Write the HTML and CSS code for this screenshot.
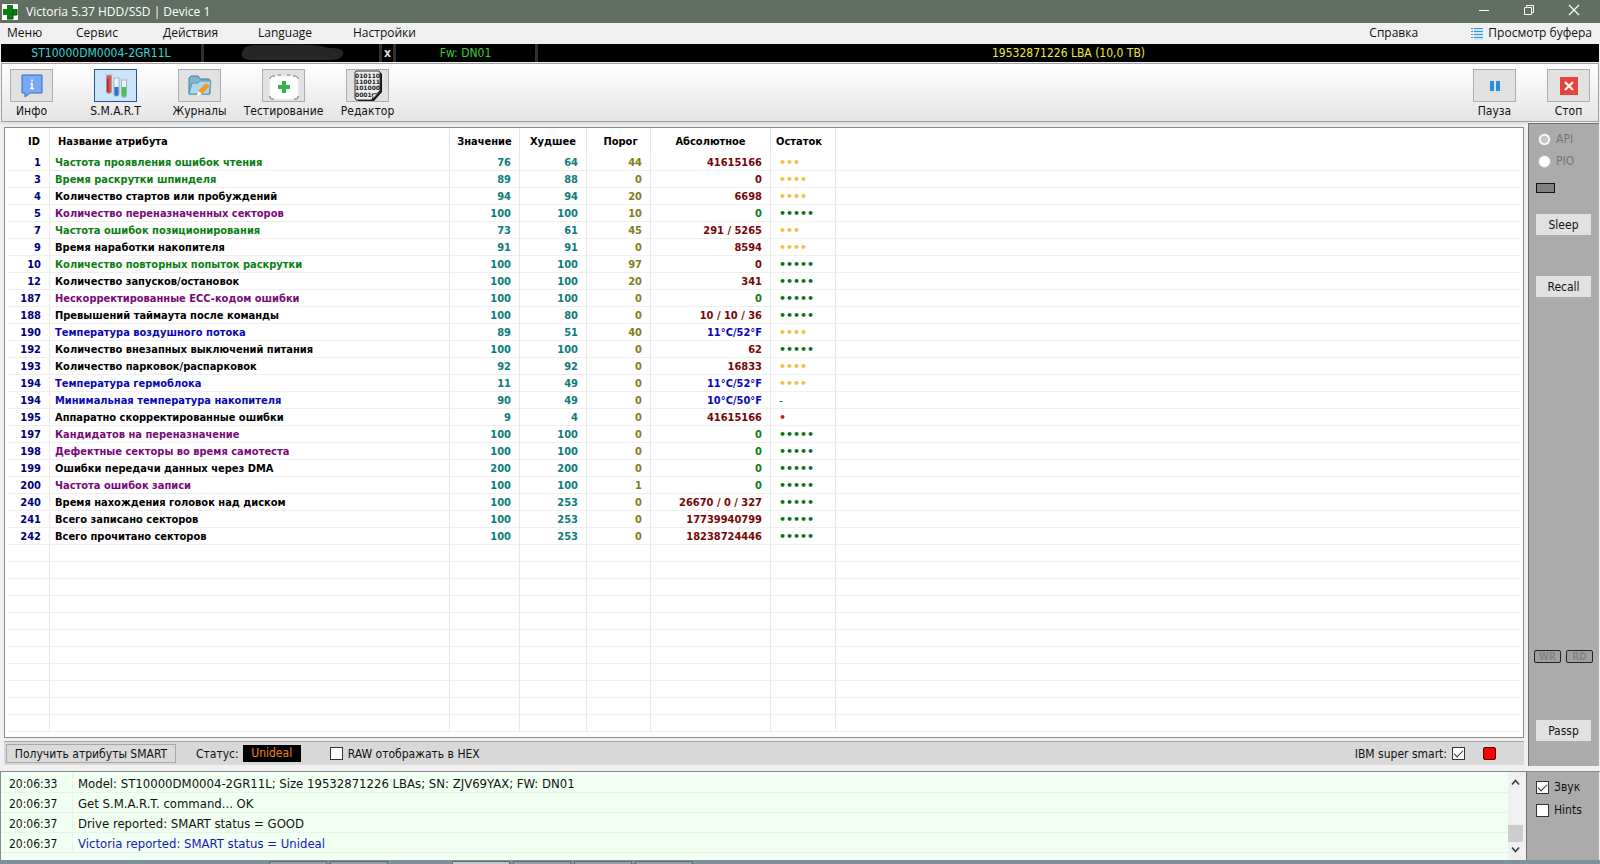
FILE: index.html
```html
<!DOCTYPE html>
<html lang="ru">
<head>
<meta charset="utf-8">
<title>Victoria 5.37 HDD/SSD | Device 1</title>
<link rel="stylesheet" href="styles.css">
</head>
<body>
<header class="titlebar">
  <svg class="app-icon" width="16" height="16" viewBox="0 0 16 16"><rect width="16" height="16" fill="#fff"/><path d="M5 1h6v4h4v6h-4v4H5v-4H1V5h4z" fill="#0a800f"/><path d="M11 5v6M5 15h6v-4h4V5" fill="none" stroke="#064f0a"/></svg>
  <h1 class="title">Victoria 5.37 HDD/SSD | Device 1</h1>
  <div class="window-controls">
    <button aria-label="Свернуть"><svg width="12" height="12" viewBox="0 0 12 12"><path d="M1 6.500h10" stroke="#fff"/></svg></button>
    <button aria-label="Восстановить"><svg width="12" height="12" viewBox="0 0 12 12" fill="none" stroke="#fff"><path d="M1.500 3.500h7v7h-7zM3.500 3.500v-2h7v7h-2"/></svg></button>
    <button aria-label="Закрыть"><svg width="12" height="12" viewBox="0 0 12 12"><path d="M1 1l10 10M11 1L1 11" stroke="#fff" stroke-width="1.200"/></svg></button>
  </div>
</header>

<nav class="menu">
  <button class="m1">Меню</button><button class="m2">Сервис</button><button class="m3">Действия</button><button class="m3">Language</button><button>Настройки</button>
  <button class="help">Справка</button>
  <button class="buffer"><svg width="12" height="13" viewBox="0 0 12 13"><path d="M0 1.500h2M0 4.500h2M0 7.500h2M0 10.500h2M3 1.500h9M3 4.500h9M3 7.500h9M3 10.500h9" stroke="#2f9be0"/><path d="M3 3h9M3 6h9M3 9h9M3 12h9" stroke="#a9dcf7"/></svg>Просмотр буфера</button>
</nav>

<section class="drive">
  <span class="model">ST10000DM0004-2GR11L</span>
  <span class="serial"><svg width="103" height="17" viewBox="0 0 103 17"><path d="M1 9C2 3 7 1 15 1h22c17-1 42-1 50 3 11 0 16 1 15 6-2 7-12 6-23 6H12C4 16 0 14 1 9z" fill="#262626"/></svg></span>
  <button class="clear">x</button>
  <span class="fw">Fw: DN01</span>
  <span class="lba">19532871226 LBA (10,0 TB)</span>
</section>

<section class="toolbar">
  <button class="tool"><span class="tile"><svg width="22" height="24" viewBox="0 0 22 24"><path d="M1 1h20v18H9l-5 4v-4H1z" fill="#77a9f4" stroke="#3d6db5"/><path d="M11 5.500v2M9.500 9.500H11v5M9 14.500h4" fill="none" stroke="#fff" stroke-width="1.600"/></svg></span>Инфо</button>
  <button class="tool active"><span class="tile"><svg width="24" height="26" viewBox="0 0 24 26"><g stroke="#8fa3b5" stroke-width=".8"><path d="M2.500 2h5v16a2.500 2.500 0 0 1-5 0z" fill="#e55246"/><path d="M10 5h5v16a2.500 2.500 0 0 1-5 0z" fill="#eef7ff"/><path d="M17.500 7h5v15a2.500 2.500 0 0 1-5 0z" fill="#eef7ff"/></g><path d="M2.900 6h1.800v13h-1.800z" fill="#b82a2a"/><path d="M10.400 14h4.200v7a2 2 0 0 1-4.200 0z" fill="#346fd0"/><path d="M17.900 14h4.200v8a2 2 0 0 1-4.200 0z" fill="#4cc04c"/><path d="M1.500 1.500h7M9 4.500h7M16.500 6.500h7" stroke="#b9cedf" stroke-width="1.500"/></svg></span>S.M.A.R.T</button>
  <button class="tool"><span class="tile"><svg width="26" height="24" viewBox="0 0 26 24"><path d="M2 20V4l2-2h7l2 3h9l1 2v13z" fill="#7fb4d2" stroke="#467f9f"/><path d="M2 20L5 9h6l2-2h11l-2 13z" fill="#aed7ec" stroke="#5b94b4"/><path d="M10 22l1-5 8-8 4 3-8 8z" fill="#f39b25"/><path d="M10 22l1-5 4 3z" fill="#fff"/></svg></span>Журналы</button>
  <button class="tool"><span class="tile"><svg width="32" height="28" viewBox="0 0 32 28"><path d="M4 4h24l2 3v19l-2 1H4l-2-1V7z" fill="#fff" stroke="#eee"/><path d="M2 7V6l2-2h3M25 4h3l2 2v1M10 3h3M19 3h3M2 24v2l2 1h2M26 27h2l2-1v-2" fill="none" stroke="#777"/><path d="M14 9h4v4h4v4h-4v4h-4v-4h-4v-4h4z" fill="#35b34a"/></svg></span>Тестирование</button>
  <button class="tool"><span class="tile"><svg width="32" height="32" viewBox="0 0 32 32"><path d="M5 2h23l2 2v18l-8 9H6l-2-3V3z" fill="#111"/><path d="M3 2l1-1h23l1 1v20l-8 8H4l-1-2z" fill="#eee" stroke="#333"/><g font-family="DejaVu Sans,sans-serif" font-size="6" font-weight="bold" fill="#222"><text x="3" y="8">010110</text><text x="3" y="14">110011</text><text x="3" y="20">101000</text><text x="3" y="27">0001</text></g><path d="M20 30q2-4 0-6 5 1 8-3z" fill="#fff" stroke="#222"/></svg></span>Редактор</button>
  <button class="tool first-right"><span class="tile"><svg width="12" height="12" viewBox="0 0 12 12"><path d="M1 1h4v10H1zM7 1h4v10H7z" fill="#2c8ce0"/></svg></span>Пауза</button>
  <button class="tool stop"><span class="tile"><svg width="18" height="18" viewBox="0 0 18 18"><path d="M0 0h18v18H0z" fill="#e5433b"/><path d="M5 5l8 8M13 5l-8 8" stroke="#fff" stroke-width="2.200"/></svg></span>Стоп</button>
</section>

<main class="workspace">
  <div class="smart">
    <div class="table-box">
      <table class="attrs">
        <colgroup><col class="c-id"><col class="c-name"><col class="c-val"><col class="c-worst"><col class="c-thr"><col class="c-raw"><col class="c-left"><col></colgroup>
        <thead><tr><th class="num">ID</th><th class="name-head">Название атрибута</th><th>Значение</th><th>Худшее</th><th class="thr-head">Порог</th><th>Абсолютное</th><th class="left-head">Остаток</th><th></th></tr></thead>
        <tbody>
          <tr class="green"><td>1</td><td>Частота проявления ошибок чтения</td><td>76</td><td>64</td><td>44</td><td>41615166</td><td class="mid">•••</td><td></td></tr>
          <tr class="green"><td>3</td><td>Время раскрутки шпинделя</td><td>89</td><td>88</td><td>0</td><td>0</td><td class="mid">••••</td><td></td></tr>
          <tr><td>4</td><td>Количество стартов или пробуждений</td><td>94</td><td>94</td><td>20</td><td>6698</td><td class="mid">••••</td><td></td></tr>
          <tr class="purple"><td>5</td><td>Количество переназначенных секторов</td><td>100</td><td>100</td><td>10</td><td class="ok">0</td><td>•••••</td><td></td></tr>
          <tr class="green"><td>7</td><td>Частота ошибок позиционирования</td><td>73</td><td>61</td><td>45</td><td>291 / 5265</td><td class="mid">•••</td><td></td></tr>
          <tr><td>9</td><td>Время наработки накопителя</td><td>91</td><td>91</td><td>0</td><td>8594</td><td class="mid">••••</td><td></td></tr>
          <tr class="green"><td>10</td><td>Количество повторных попыток раскрутки</td><td>100</td><td>100</td><td>97</td><td>0</td><td>•••••</td><td></td></tr>
          <tr><td>12</td><td>Количество запусков/остановок</td><td>100</td><td>100</td><td>20</td><td>341</td><td>•••••</td><td></td></tr>
          <tr class="purple"><td>187</td><td>Нескорректированные ECC-кодом ошибки</td><td>100</td><td>100</td><td>0</td><td class="ok">0</td><td>•••••</td><td></td></tr>
          <tr><td>188</td><td>Превышений таймаута после команды</td><td>100</td><td>80</td><td>0</td><td>10 / 10 / 36</td><td>•••••</td><td></td></tr>
          <tr class="blue"><td>190</td><td>Температура воздушного потока</td><td>89</td><td>51</td><td>40</td><td>11°C/52°F</td><td class="mid">••••</td><td></td></tr>
          <tr><td>192</td><td>Количество внезапных выключений питания</td><td>100</td><td>100</td><td>0</td><td>62</td><td>•••••</td><td></td></tr>
          <tr><td>193</td><td>Количество парковок/распарковок</td><td>92</td><td>92</td><td>0</td><td>16833</td><td class="mid">••••</td><td></td></tr>
          <tr class="blue"><td>194</td><td>Температура гермоблока</td><td>11</td><td>49</td><td>0</td><td>11°C/52°F</td><td class="mid">••••</td><td></td></tr>
          <tr class="blue"><td>194</td><td>Минимальная температура накопителя</td><td>90</td><td>49</td><td>0</td><td>10°C/50°F</td><td class="none">-</td><td></td></tr>
          <tr><td>195</td><td>Аппаратно скорректированные ошибки</td><td>9</td><td>4</td><td>0</td><td>41615166</td><td class="bad">•</td><td></td></tr>
          <tr class="purple"><td>197</td><td>Кандидатов на переназначение</td><td>100</td><td>100</td><td>0</td><td class="ok">0</td><td>•••••</td><td></td></tr>
          <tr class="purple"><td>198</td><td>Дефектные секторы во время самотеста</td><td>100</td><td>100</td><td>0</td><td class="ok">0</td><td>•••••</td><td></td></tr>
          <tr><td>199</td><td>Ошибки передачи данных через DMA</td><td>200</td><td>200</td><td>0</td><td class="ok">0</td><td>•••••</td><td></td></tr>
          <tr class="purple"><td>200</td><td>Частота ошибок записи</td><td>100</td><td>100</td><td>1</td><td class="ok">0</td><td>•••••</td><td></td></tr>
          <tr><td>240</td><td>Время нахождения головок над диском</td><td>100</td><td>253</td><td>0</td><td>26670 / 0 / 327</td><td>•••••</td><td></td></tr>
          <tr><td>241</td><td>Всего записано секторов</td><td>100</td><td>253</td><td>0</td><td>17739940799</td><td>•••••</td><td></td></tr>
          <tr><td>242</td><td>Всего прочитано секторов</td><td>100</td><td>253</td><td>0</td><td>18238724446</td><td>•••••</td><td></td></tr>
          <tr><td></td><td></td><td></td><td></td><td></td><td></td><td></td><td></td></tr>
          <tr><td></td><td></td><td></td><td></td><td></td><td></td><td></td><td></td></tr>
          <tr><td></td><td></td><td></td><td></td><td></td><td></td><td></td><td></td></tr>
          <tr><td></td><td></td><td></td><td></td><td></td><td></td><td></td><td></td></tr>
          <tr><td></td><td></td><td></td><td></td><td></td><td></td><td></td><td></td></tr>
          <tr><td></td><td></td><td></td><td></td><td></td><td></td><td></td><td></td></tr>
          <tr><td></td><td></td><td></td><td></td><td></td><td></td><td></td><td></td></tr>
          <tr><td></td><td></td><td></td><td></td><td></td><td></td><td></td><td></td></tr>
          <tr><td></td><td></td><td></td><td></td><td></td><td></td><td></td><td></td></tr>
          <tr><td></td><td></td><td></td><td></td><td></td><td></td><td></td><td></td></tr>
          <tr><td></td><td></td><td></td><td></td><td></td><td></td><td></td><td></td></tr>
        </tbody>
      </table>
    </div>
    <div class="statusbar">
      <button class="get">Получить атрибуты SMART</button>
      <span class="status-label">Статус:</span>
      <output class="status">Unideal</output>
      <label class="check hex"><input type="checkbox">RAW отображать в HEX</label>
      <label class="check ibm">IBM super smart:<input type="checkbox" checked></label>
      <span class="led"></span>
    </div>
  </div>
  <aside class="side">
    <label class="radio"><input type="radio" name="mode" checked disabled>API</label>
    <label class="radio"><input type="radio" name="mode" disabled>PIO</label>
    <span class="indicator"></span>
    <button class="side-btn sleep">Sleep</button>
    <button class="side-btn recall">Recall</button>
    <div class="rw"><span>WR</span><span>RD</span></div>
    <button class="side-btn passp">Passp</button>
  </aside>
</main>

<footer class="bottom">
  <div class="log-box">
    <table class="log">
      <tbody>
        <tr><td class="time">20:06:33</td><td>Model: ST10000DM0004-2GR11L; Size 19532871226 LBAs; SN: ZJV69YAX; FW: DN01</td></tr>
        <tr><td class="time">20:06:37</td><td>Get S.M.A.R.T. command... OK</td></tr>
        <tr><td class="time">20:06:37</td><td>Drive reported: SMART status = GOOD</td></tr>
        <tr><td class="time">20:06:37</td><td class="verdict">Victoria reported: SMART status = Unideal</td></tr>
      </tbody>
    </table>
  </div>
  <div class="scroll">
    <button aria-label="Вверх"><svg width="9" height="7" viewBox="0 0 9 7"><path d="M1 5.500l3.500-4 3.500 4" fill="none" stroke="#444" stroke-width="1.800"/></svg></button>
    <span class="track"><span class="thumb"></span></span>
    <button aria-label="Вниз"><svg width="9" height="7" viewBox="0 0 9 7"><path d="M1 1.500l3.500 4 3.500-4" fill="none" stroke="#444" stroke-width="1.800"/></svg></button>
  </div>
  <aside class="options">
    <label class="check"><input type="checkbox" checked>Звук</label>
    <label class="check"><input type="checkbox">Hints</label>
  </aside>
</footer>

<div class="taskbar"><i></i><i></i><i class="current"></i><i></i><i></i><i></i></div>
</body>
</html>
```
FILE: styles.css
```css
* { box-sizing: border-box; }
body {
  margin: 0;
  min-height: 100vh;
  display: flex;
  flex-direction: column;
  background: #f0f0f0;
  color: #111;
  font: 12px/16px "DejaVu Sans Condensed", "DejaVu Sans", sans-serif;
  white-space: nowrap;
}
button { padding: 0; border: 0; background: none; font: inherit; color: inherit; }
svg { display: block; flex: none; }

.titlebar { display: flex; align-items: center; height: 23px; padding-left: 2px; background: #606f62; color: #fff; }
.title { margin: 0 0 0 8px; font: 12px/20px "Open Sans", "Noto Sans", sans-serif; }
.window-controls { display: flex; margin-left: auto; height: 100%; padding-right: 4px; }
.window-controls button { display: flex; align-items: center; justify-content: center; width: 45px; padding-bottom: 3px; }

.menu { display: flex; align-items: center; height: 20px; padding: 0 8px 0 7px; font: 12px/18px "Open Sans", "Noto Sans", sans-serif; }
.menu button { text-align: left; }
.menu .m1 { width: 69px; }
.menu .m2 { width: 87px; }
.menu .m3 { width: 95px; }
.menu .help { width: 102px; margin-left: auto; }
.menu .buffer { display: flex; align-items: center; gap: 5px; }

.drive { display: flex; height: 18px; margin: 1px 1px 0; background: #000; text-align: center; line-height: 18px; }
.drive > * { border-right: 3px solid #303030; color: #fff; }
.drive .model { width: 203px; color: #35d5d5; }
.drive .serial { display: flex; width: 178px; padding-left: 37px; }
.drive .clear { width: 14px; font-weight: bold; color: #ddd; }
.drive .fw { width: 142px; color: #35d035; }
.drive .lba { flex: 1; border: 0; color: #eee83c; }

.toolbar { display: flex; gap: 41px; height: 59px; padding: 5px 8px 0; margin: 1px 1px 0; border: 1px solid #a0a0a0; background: linear-gradient(#fff, #e4e4e4); }
.tool { display: flex; flex-direction: column; align-items: center; gap: 1px; width: 43px; height: 50px; }
.tile { display: flex; align-items: center; justify-content: center; flex: none; width: 43px; height: 33px; border: 1px solid #adadad; background: #e1e1e1; }
.active .tile { border-color: #23588c; background: #cce4f7; }
.first-right { margin-left: auto; }
.stop { margin-left: -10px; }

.workspace { display: flex; flex: 1; }
.smart { display: flex; flex-direction: column; flex: 1; min-width: 0; padding: 5px 4px 1px; background: linear-gradient(#dedede, #f0f0f0 4px); }
.table-box { flex: 1; padding: 0 2px 5px; border: 1px solid #868b8e; background: #fff; }
.attrs { width: 100%; border-collapse: separate; border-spacing: 0; table-layout: fixed; font-weight: bold; font-size: 11px; line-height: 15px; }
.c-id { width: 43px; }
.c-name { width: 400px; }
.c-val { width: 70px; }
.c-worst { width: 67px; }
.c-thr { width: 64px; }
.c-raw { width: 120px; }
.c-left { width: 65px; }
.attrs th { height: 26px; padding: 0; border-right: 1px solid #e6e6e6; color: #000; font-size: 11px; }
.attrs th.num { padding-right: 9px; text-align: right; }
.attrs th.name-head { padding-left: 8px; text-align: left; }
.attrs th.thr-head { padding-left: 4px; }
.attrs th.left-head { padding-left: 5px; text-align: left; }
.attrs td { height: 17px; padding: 1px 8px 0 5px; border-right: 1px solid #e9e9e9; border-bottom: 1px solid #efefef; text-align: right; color: #000; }
.attrs th:last-child, .attrs td:last-child { border-right: 0; }
.attrs td:nth-child(1) { color: #000080; }
.attrs td:nth-child(2) { text-align: left; }
.attrs td:nth-child(3), .attrs td:nth-child(4) { color: #0c7c7c; }
.attrs td:nth-child(5) { color: #80801a; }
.attrs td:nth-child(6) { color: #780606; }
.attrs td:nth-child(7) { padding-left: 8px; text-align: left; font-family: "DejaVu Sans", sans-serif; color: #087010; }
.attrs td.mid:nth-child(7) { color: #f0c040; }
.attrs td.bad:nth-child(7) { color: #d01010; }
.attrs td.none:nth-child(7) { font-weight: normal; }
.attrs td.ok:nth-child(6) { color: #0a7f12; }
.green td:nth-child(2), .attrs .green td:nth-child(2) { color: #0a7f12; }
.attrs .purple td:nth-child(2) { color: #7a0a7a; }
.attrs .blue td:nth-child(2), .attrs .blue td:nth-child(6) { color: #0808b8; }

.statusbar { display: flex; align-items: center; height: 24px; margin-top: 3px; border-top: 1px solid #a8a8a8; background: #d8d8d8; }
.get { height: 19px; width: 170px; margin-left: 2px; border: 1px solid #a8a8a8; background: #dadada; }
.status-label { margin-left: 20px; }
.status { width: 58px; height: 17px; margin-left: 4px; background: #000; color: #f08020; text-align: center; }
.check { display: flex; align-items: center; gap: 5px; }
.hex { margin-left: 29px; }
.ibm { margin-left: auto; }
.led { width: 13px; height: 13px; margin: 0 28px 0 18px; border: 1px solid #500; border-radius: 2px; background: #f00; }
input { appearance: none; margin: 0; flex: none; width: 13px; height: 13px; border: 1px solid #333; background: #fff; }
input[type="checkbox"]:checked::before { content: ""; display: block; width: 8px; height: 4px; margin: 2px 0 0 1px; border: solid #333; border-width: 0 0 1px 1px; transform: rotate(-45deg); }
input[type="radio"] { border-color: #bbb; border-radius: 50%; }
input[type="radio"]:checked { background: radial-gradient(#c6c6c6 45%, #fff 55%); }

.side { display: flex; flex-direction: column; width: 71px; margin: 1px 1px 0 0; padding: 7px 7px 0; border-left: 1px solid #707070; border-top: 1px solid #707070; background: #ababab; }
.radio { display: flex; align-items: center; gap: 5px; height: 22px; padding: 0 0 6px 2px; color: #777; }
.indicator { width: 19px; height: 10px; margin-top: 8px; border: 1px solid #111; background: #808080; }
.side-btn { width: 55px; height: 21px; background: #e1e1e1; }
.sleep { margin-top: 21px; }
.recall { margin-top: 41px; }
.rw { display: flex; justify-content: space-between; margin: auto -1px 0 -2px; font-size: 10px; font-weight: bold; color: #858585; }
.rw span { width: 27px; height: 13px; border: 1px solid #222; border-radius: 2px; background: #a0a0a0; text-align: center; line-height: 12px; }
.passp { margin: 57px 0 25px; }

.bottom { display: flex; height: 89px; margin-top: 5px; border-top: 1px solid #868b8e; background: #f0f0f0; }
.log-box { flex: 1; padding-top: 1px; border-left: 1px solid #868b8e; background: #f2fff3; }
.log { width: 100%; border-spacing: 0; }
.log td { height: 20px; padding: 2px 5px 0; border-bottom: 1px solid #e7f3e8; font-size: 13px; }
.log .time { width: 72px; padding-left: 8px; border-right: 1px solid #e7f3e8; font-size: 12px; }
.log .verdict { color: #1818b0; }
.scroll { display: flex; flex-direction: column; width: 15px; margin-right: 3px; background: #f0f0f0; }
.scroll button { display: flex; align-items: center; justify-content: center; height: 18px; padding-top: 3px; }
.scroll .track + button { padding: 0 0 3px; }
.track { display: flex; flex: 1; align-items: flex-end; }
.thumb { width: 100%; height: 17px; background: #cdcdcd; }
.options { display: flex; flex-direction: column; gap: 7px; width: 74px; padding: 7px 9px; border-left: 1px solid #707070; border-right: 1px solid #f0f0f0; background: #ababab; }

.taskbar { display: flex; gap: 3px; height: 4px; padding: 1px 0 0 269px; background: #7f929b; }
.taskbar i { width: 58px; border: solid #5d6d75; border-width: 1px 1px 0; background: #93a1a7; }
.taskbar .current { margin-left: 61px; background: #c0c6c9; }
```
